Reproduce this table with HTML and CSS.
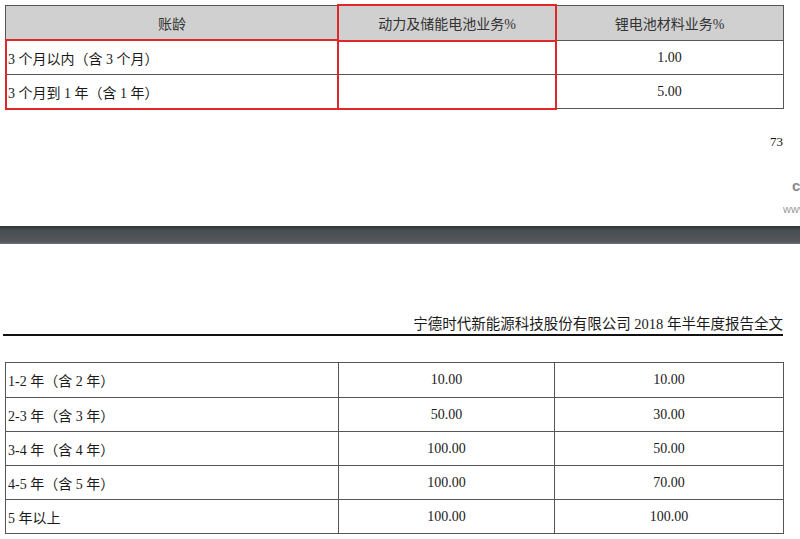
FILE: index.html
```html
<!DOCTYPE html>
<html lang="zh">
<head>
<meta charset="utf-8">
<link rel="stylesheet" href="styles.css">
</head>
<body>
<div class="page">
  <div class="top-wrap">
    <table class="grid t1">
      <colgroup><col class="c1"><col class="c2"><col class="c3"></colgroup>
      <tr class="head"><td class="ctr">账龄</td><td class="ctr">动力及储能电池业务%</td><td class="ctr">锂电池材料业务%</td></tr>
      <tr><td>3 个月以内（含 3 个月）</td><td></td><td class="ctr">1.00</td></tr>
      <tr><td>3 个月到 1 年（含 1 年）</td><td></td><td class="ctr">5.00</td></tr>
    </table>
    <div class="mark mark-a"></div>
    <div class="mark mark-b"></div>
  </div>
  <div class="pnum">73</div>
  <div class="wm wm-c">cninfo</div>
  <div class="wm wm-www">www.cninfo.com.cn</div>
  <div class="band"></div>
  <div class="runhead">宁德时代新能源科技股份有限公司 2018 年半年度报告全文</div>
  <table class="grid t2">
    <colgroup><col class="d1"><col class="d2"><col class="d3"></colgroup>
    <tr><td>1-2 年（含 2 年）</td><td class="ctr">10.00</td><td class="ctr">10.00</td></tr>
    <tr><td>2-3 年（含 3 年）</td><td class="ctr">50.00</td><td class="ctr">30.00</td></tr>
    <tr><td>3-4 年（含 4 年）</td><td class="ctr">100.00</td><td class="ctr">50.00</td></tr>
    <tr><td>4-5 年（含 5 年）</td><td class="ctr">100.00</td><td class="ctr">70.00</td></tr>
    <tr><td>5 年以上</td><td class="ctr">100.00</td><td class="ctr">100.00</td></tr>
  </table>
</div>
</body>
</html>
```
FILE: styles.css
```css
html, body {
  margin: 0;
  padding: 0;
  background: #fff;
}
body {
  font-family: "Liberation Serif", "Noto Sans CJK SC", serif;
  color: #1a1a1a;
  font-size: 14px;
}
.page {
  width: 800px;
  height: 539px;
  overflow: hidden;
}
.top-wrap {
  position: relative;
  padding: 5px 0 0 5px;
}
.grid {
  border-collapse: collapse;
  table-layout: fixed;
}
.grid td {
  border: 1px solid #555;
  padding: 0 0 0 2px;
  white-space: nowrap;
  overflow: hidden;
}
.grid td.ctr {
  text-align: center;
  padding: 0;
}
.t1 { width: 778px; }
.t1 .c1 { width: 333px; }
.t1 .c2 { width: 217px; }
.t1 .c3 { width: 228px; }
.t1 tr { height: 34px; }
.t1 tr.head { height: 35px; }
.t1 tr.head td {
  background: #d0d0d0;
  color: #333;
}
.mark {
  position: absolute;
  border: 2px solid #e0282a;
  box-sizing: border-box;
}
.mark-a {
  left: 5px;
  top: 39px;
  width: 334px;
  height: 71px;
}
.mark-b {
  left: 337px;
  top: 4px;
  width: 220px;
  height: 106px;
  background: linear-gradient(#e0282a, #e0282a) 0 34px / 100% 2px no-repeat;
}
.pnum {
  margin-top: 25px;
  padding-right: 17px;
  text-align: right;
  font-size: 13px;
  line-height: 16px;
  color: #111;
}
.wm {
  white-space: nowrap;
  overflow: hidden;
  font-family: "Liberation Sans", sans-serif;
}
.wm-c {
  margin-top: 27px;
  padding-left: 792px;
  font-size: 15px;
  line-height: 18px;
  font-weight: bold;
  color: #8a8a8a;
}
.wm-www {
  margin-top: 7px;
  padding-left: 783px;
  font-size: 11px;
  line-height: 14px;
  color: #999;
}
.band {
  margin-top: 10px;
  height: 18px;
  background: linear-gradient(#2f3235, #4a4e52 25%, #53575b 85%, #6a6d70);
}
.runhead {
  margin: 70px 17px 0 3px;
  text-align: right;
  font-size: 14.5px;
  line-height: 20px;
  color: #1a1a1a;
  border-bottom: 2px solid #111;
}
.t2 {
  margin: 26px 0 0 5px;
  width: 778px;
}
.t2 .d1 { width: 333px; }
.t2 .d2 { width: 216px; }
.t2 .d3 { width: 229px; }
.t2 tr { height: 34px; }
.t2 tr:first-child { height: 35px; }
```
